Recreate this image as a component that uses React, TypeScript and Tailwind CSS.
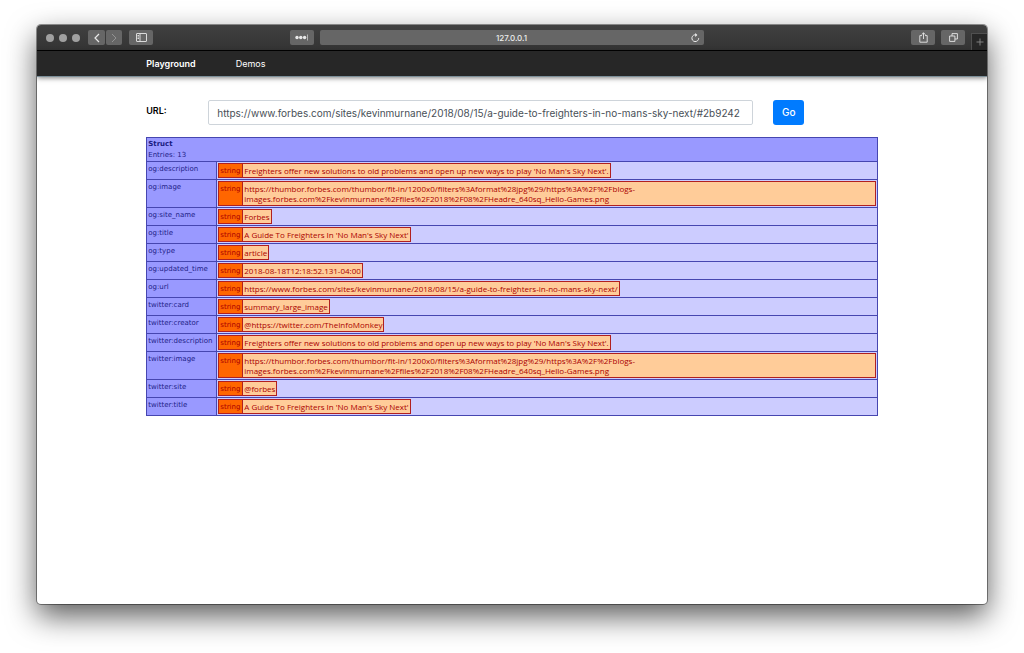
import { ReactNode } from "react";

const entries = [
  ["og:description", "Freighters offer new solutions to old problems and open up new ways to play 'No Man's Sky Next'."],
  [
    "og:image",
    "https://thumbor.forbes.com/thumbor/fit-in/1200x0/filters%3Aformat%28jpg%29/https%3A%2F%2Fblogs-images.forbes.com%2Fkevinmurnane%2Ffiles%2F2018%2F08%2FHeadre_640sq_Hello-Games.png",
  ],
  ["og:site_name", "Forbes"],
  ["og:title", "A Guide To Freighters In 'No Man's Sky Next'"],
  ["og:type", "article"],
  ["og:updated_time", "2018-08-18T12:18:52.131-04:00"],
  ["og:url", "https://www.forbes.com/sites/kevinmurnane/2018/08/15/a-guide-to-freighters-in-no-mans-sky-next/"],
  ["twitter:card", "summary_large_image"],
  ["twitter:creator", "@https://twitter.com/TheInfoMonkey"],
  ["twitter:description", "Freighters offer new solutions to old problems and open up new ways to play 'No Man's Sky Next'."],
  [
    "twitter:image",
    "https://thumbor.forbes.com/thumbor/fit-in/1200x0/filters%3Aformat%28jpg%29/https%3A%2F%2Fblogs-images.forbes.com%2Fkevinmurnane%2Ffiles%2F2018%2F08%2FHeadre_640sq_Hello-Games.png",
  ],
  ["twitter:site", "@forbes"],
  ["twitter:title", "A Guide To Freighters In 'No Man's Sky Next'"],
];

function ToolButton({ label, className = "", children }: { label: string; className?: string; children: ReactNode }) {
  return (
    <button
      type="button"
      aria-label={label}
      className={`flex h-[15px] items-center justify-center rounded-[2px] bg-[#666] text-[#e8e8e8] ${className}`}
    >
      {children}
    </button>
  );
}

function Toolbar() {
  return (
    <div className="flex h-[26px] items-center border-b border-black bg-linear-to-b from-[#404040] to-[#343434]">
      <div className="flex flex-1 items-center pr-[6px] pl-[9px]">
        <div className="mr-2 flex gap-[5px]">
          <span className="size-2 rounded-full bg-[#a0a0a0]" />
          <span className="size-2 rounded-full bg-[#a0a0a0]" />
          <span className="size-2 rounded-full bg-[#a0a0a0]" />
        </div>
        <div className="flex gap-px">
          <ToolButton label="Back" className="w-[17px]">
            <svg width="6" height="10" viewBox="0 0 6 10" fill="none" stroke="currentColor" strokeWidth="1.2">
              <path d="M5 1 1 5l4 4" />
            </svg>
          </ToolButton>
          <ToolButton label="Forward" className="w-4">
            <svg width="6" height="10" viewBox="0 0 6 10" fill="none" stroke="#929292" strokeWidth="1">
              <path d="m1 1 4 4-4 4" />
            </svg>
          </ToolButton>
        </div>
        <ToolButton label="Sidebar" className="ml-[7px] w-6">
          <svg width="11" height="9" viewBox="0 0 11 9" fill="none" stroke="currentColor" strokeWidth="0.9">
            <rect x="0.5" y="0.5" width="10" height="8" rx="0.4" />
            <path d="M4 .5v8M1.5 2.5H3M1.5 4H3M1.5 5.5H3" />
          </svg>
        </ToolButton>
        <ToolButton label="Extensions" className="ml-auto w-6">
          <svg width="14" height="7" viewBox="0 0 14 7" fill="currentColor">
            <circle cx="2" cy="3.5" r="1.7" />
            <circle cx="5.8" cy="3.5" r="1.7" />
            <circle cx="9.6" cy="3.5" r="1.7" />
            <path d="M12 .5h1v6h-1z" opacity="0.6" />
          </svg>
        </ToolButton>
      </div>
      <div className="flex h-[15px] w-[384px] items-center rounded-[2px] bg-[#666] pr-1 text-[#ececec]">
        <span className="flex-1 pl-3 text-center text-[8px] leading-3 font-medium">127.0.0.1</span>
        <button type="button" aria-label="Reload">
          <svg width="9" height="10" viewBox="0 0 9 10" fill="none" stroke="currentColor" strokeWidth="1">
            <path d="M5.2 1.9a3.4 3.4 0 1 0 2.5 3.3" />
            <path d="M4.2.1 6.4 2 4.2 3.9" fill="currentColor" stroke="none" />
          </svg>
        </button>
      </div>
      <div className="flex flex-1 items-center justify-end self-stretch pl-[15px]">
        <ToolButton label="Share" className="mr-[6px] w-6">
          <svg width="9" height="11" viewBox="0 0 9 11" fill="none" stroke="currentColor" strokeWidth="0.9">
            <path d="M3 3.6H.8v6.6h7.4V3.6H6M4.5 7V.9M2.6 2.7 4.5.8l1.9 1.9" />
          </svg>
        </ToolButton>
        <ToolButton label="Tabs" className="mr-[6px] w-6">
          <svg width="9" height="9" viewBox="0 0 9 9" fill="none" stroke="currentColor" strokeWidth="0.9">
            <path d="M.6 3h5.3v5.4H.6zM3 3V.6h5.4V6H6" />
          </svg>
        </ToolButton>
        <button
          type="button"
          aria-label="New tab"
          className="flex h-[17px] w-4 items-center justify-center self-end border-t border-l border-[#505050] bg-[#272727]"
        >
          <svg width="8" height="8" viewBox="0 0 8 8" stroke="#8b8b8b" strokeWidth="0.9">
            <path d="M4 .5v7M.5 4h7" />
          </svg>
        </button>
      </div>
    </div>
  );
}

function Dump() {
  return (
    <table className="w-full border-collapse font-[Verdana,'DejaVu_Sans',sans-serif] text-[7px] leading-[10px] text-[#222288]">
      <thead>
        <tr>
          <th
            colSpan={2}
            className="border border-[#4646b0] bg-[#9999ff] px-px pt-px text-left leading-[11px] font-normal"
          >
            <b className="block text-[#1a1a80]">Struct</b>
            Entries: {entries.length}
          </th>
        </tr>
      </thead>
      <tbody>
        {entries.map(([key, value]) => (
          <tr key={key}>
            <th
              scope="row"
              className="w-[70px] border border-[#4646b0] bg-[#9999ff] px-px pt-[2px] text-left align-top font-normal whitespace-nowrap"
            >
              {key}
            </th>
            <td className="border border-[#4646b0] bg-[#ccccff] p-px">
              <div className="flex w-fit border border-[#b02020] bg-[#ffcc99] text-[#aa0000]">
                <span className="w-6 shrink-0 border-r border-[#b02020] bg-[#ff6600] px-px pt-[2px] pb-px">string</span>
                <span className="px-px pt-[2px] pb-px font-['Open_Sans',sans-serif] text-[8px] font-medium">
                  {value}
                </span>
              </div>
            </td>
          </tr>
        ))}
      </tbody>
    </table>
  );
}

export default function App() {
  return (
    <div className="flex min-h-screen flex-col bg-white px-[37px] pt-[25px] pb-[49px] font-['Inter',sans-serif]">
      <div className="flex flex-1 flex-col overflow-hidden rounded-[4px] bg-white shadow-[0_0_0_1px_rgba(0,0,0,0.4),0_12px_30px_rgba(0,0,0,0.65)]">
        <Toolbar />
        <nav className="h-[25px] bg-[#272727] text-white shadow-[0_1px_0_#7c8f99,0_2px_5px_rgba(0,0,0,0.5)]">
          <div className="mx-auto flex h-full w-[77%] items-center gap-10 text-[9px]">
            <a href="#playground" className="font-semibold">
              Playground
            </a>
            <a href="#demos">Demos</a>
          </div>
        </nav>
        <main className="mx-auto w-[77%] pt-6">
          <form className="mb-3 flex items-start" onSubmit={(e) => e.preventDefault()}>
            <label htmlFor="url" className="w-[62px] pt-[5px] text-[9px] leading-3 font-semibold text-black">
              URL:
            </label>
            <input
              id="url"
              type="text"
              defaultValue="https://www.forbes.com/sites/kevinmurnane/2018/08/15/a-guide-to-freighters-in-no-mans-sky-next/#2b9242"
              className="h-[25px] w-[545px] rounded-[2px] border border-[#ced4da] bg-white px-2 text-[10px] text-[#495057]"
            />
            <button type="submit" className="ml-5 h-[25px] w-[31px] rounded-[3px] bg-[#007bff] text-[10px] font-medium text-white">
              Go
            </button>
          </form>
          <Dump />
        </main>
      </div>
    </div>
  );
}
